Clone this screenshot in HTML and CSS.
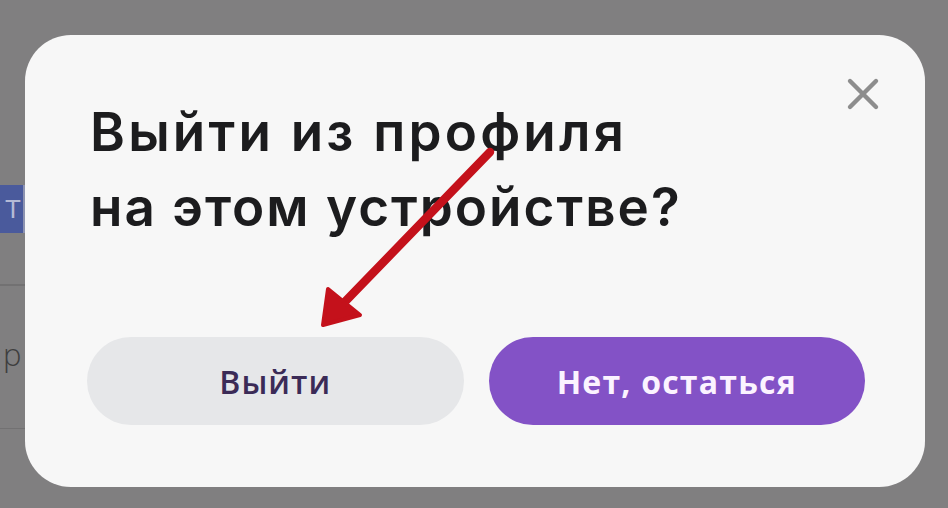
FILE: index.html
```html
<!DOCTYPE html>
<html lang="ru">
<head>
<meta charset="utf-8">
<title>Выйти из профиля</title>
<link rel="stylesheet" href="styles.css">
</head>
<body>
<div class="screen">
  <div class="behind">
    <div class="tab">Т</div>
    <div class="row row-a"></div>
    <div class="row row-b"><span class="letter">р</span></div>
  </div>
  <div class="modal">
    <button class="close" aria-label="Закрыть">
      <svg width="34" height="34" viewBox="0 0 34 34"><path d="M4 4 L30 30 M30 4 L4 30" stroke="#8d8d8d" stroke-width="4.4" stroke-linecap="round"/></svg>
    </button>
    <h1 class="title"><span class="line-one">Выйти из профиля</span><br>на этом устройстве?</h1>
    <div class="actions">
      <button class="btn btn-exit">Выйти</button>
      <button class="btn btn-stay">Нет, остаться</button>
    </div>
    <svg class="arrow" width="200" height="200" viewBox="0 0 200 200">
      <path d="M193 5 L39 164" stroke="#c4111b" stroke-width="8.5" stroke-linecap="round"/>
      <path d="M26 178 L31 142 L63 168 Z" fill="#c4111b" stroke="#c4111b" stroke-width="4" stroke-linejoin="round"/>
    </svg>
  </div>
</div>
</body>
</html>
```
FILE: styles.css
```css
html, body {
  margin: 0;
  padding: 0;
}
body {
  background: #807f80;
  width: 948px;
  height: 508px;
  overflow: hidden;
  font-family: "Inter", "Noto Sans", sans-serif;
}
.screen {
  display: flex;
  height: 508px;
}
.behind {
  width: 25px;
  flex: none;
  padding-top: 185px;
  display: flex;
  flex-direction: column;
}
.tab {
  height: 48px;
  background: #4a5a9c;
  color: #b4bad6;
  font: 400 26px "Liberation Sans", sans-serif;
  line-height: 48px;
  padding-left: 5px;
  box-sizing: border-box;
  border-right: 2px solid #8d93b0;
}
.row {
  border-top: 1px solid #727172;
}
.row-a {
  height: 0;
  margin-top: 51px;
}
.row-b {
  height: 142px;
  border-bottom: 1px solid #727172;
}
.letter {
  display: block;
  margin-top: 48px;
  margin-left: 3px;
  font: 300 31px "Open Sans", sans-serif;
  color: #3e3e3e;
  line-height: 40px;
}
.modal {
  position: relative;
  margin-top: 35px;
  width: 900px;
  height: 452px;
  flex: none;
  background: #f7f7f7;
  border-radius: 46px;
  box-sizing: border-box;
  padding: 60px 60px 0 62px;
}
.close {
  position: absolute;
  top: 42px;
  right: 45px;
  width: 34px;
  height: 34px;
  padding: 0;
  border: 0;
  background: none;
  display: flex;
}
.title {
  margin: 0 0 0 3px;
  font-family: "Inter", "Noto Sans", sans-serif;
  font-weight: 600;
  font-size: 53px;
  line-height: 75px;
  color: #1c1c1e;
  letter-spacing: 2px;
}
.line-one {
  letter-spacing: 3.2px;
}
.actions {
  display: flex;
  gap: 25px;
  margin-top: 92px;
}
.btn {
  width: 377px;
  height: 88px;
  border: 0;
  border-radius: 44px;
  font-family: "Open Sans", "Roboto", sans-serif;
  font-size: 32px;
  padding: 0;
}
.btn-exit {
  background: #e6e7e9;
  color: #3b2b57;
  font-weight: 600;
  letter-spacing: 1px;
}
.btn-stay {
  background: #8352c6;
  color: #fbf3ff;
  font-weight: 700;
  letter-spacing: 1.2px;
}
.arrow {
  position: absolute;
  left: 272px;
  top: 112px;
}
```
